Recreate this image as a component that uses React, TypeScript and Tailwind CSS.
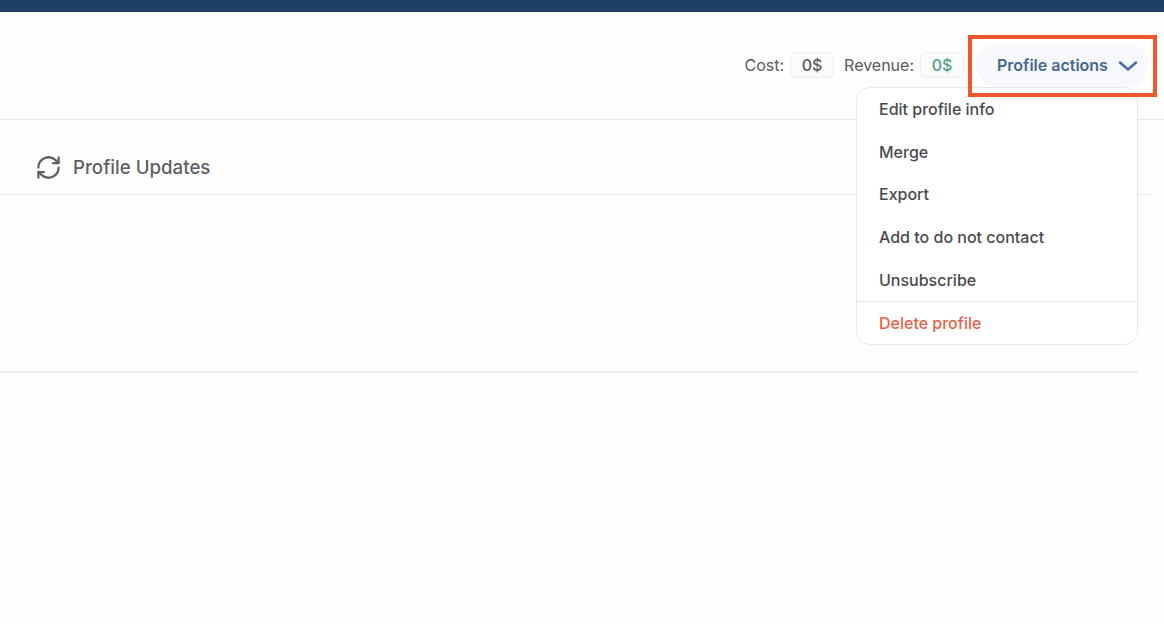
/**
 * ProfilePage — contact profile header with the actions dropdown open.
 */

const menuItems = ['Edit profile info', 'Merge', 'Export', 'Add to do not contact', 'Unsubscribe']

function RefreshIcon() {
  return (
    <svg
      viewBox="0 0 24 24"
      fill="none"
      stroke="currentColor"
      strokeWidth={2}
      strokeLinecap="round"
      strokeLinejoin="round"
      className="w-[27px] h-[27px] text-[#5f5f63]"
      aria-hidden="true"
    >
      <path d="M3 12a9 9 0 0 1 15-6.7L21 8" />
      <path d="M21 3v5h-5" />
      <path d="M21 12a9 9 0 0 1-15 6.7L3 16" />
      <path d="M3 21v-5h5" />
    </svg>
  )
}

function Amount({ label, color }: { label: string; color: string }) {
  return (
    <div className="flex items-center gap-[6px]">
      <span className="text-[16px] text-[#59595c]">{label}</span>
      <span
        className={`flex items-center justify-center w-[44px] h-[26px] rounded-[5px] border border-[#f0f0f3] bg-[#fbfbfc] text-[16px] font-medium ${color}`}
      >
        0$
      </span>
    </div>
  )
}

function ActionsMenu() {
  return (
    <div className="absolute left-[856px] top-[87px] w-[282px] h-[258px] rounded-[14px] border border-[#e8e8ec] bg-white">
      <ul className="flex flex-col">
        {menuItems.map((item) => (
          <li key={item} className="flex items-center h-[42.6px] px-[22px] text-[16px] font-medium text-[#4a4a4d]">
            {item}
          </li>
        ))}
      </ul>
      <div className="flex items-center h-[43px] px-[22px] border-t border-[#e8e8ec] text-[16px] font-medium text-[#ea5f48]">
        Delete profile
      </div>
    </div>
  )
}

export default function App() {
  return (
    <div className="relative w-[1164px] h-[624px] overflow-hidden bg-[#fefefe] font-['Inter',sans-serif]">
      <div className="h-[12px] bg-[#1f3f68]" />

      <header className="flex items-center justify-end h-[108px] pr-[15px] border-b border-[#e9e9ec]">
        <div className="flex items-center gap-[10px] mb-[2px]">
          <Amount label="Cost:" color="text-[#59595c]" />
          <Amount label="Revenue:" color="text-[#4f9f84]" />
        </div>
        <button
          type="button"
          className="flex items-center justify-between w-[173px] h-[43px] ml-[12px] pl-[21px] pr-[11px] rounded-full bg-[#f8f9fd] text-[16px] font-semibold text-[#44668f]"
        >
          <span className="mb-[2px]">Profile actions</span>
          <svg
            viewBox="0 0 20 10"
            fill="none"
            stroke="currentColor"
            strokeWidth={2.4}
            strokeLinecap="round"
            strokeLinejoin="round"
            className="w-[20px] h-[10px] text-[#4a6a92]"
            aria-hidden="true"
          >
            <path d="M2 1.5L10 8.5L18 1.5" />
          </svg>
        </button>
      </header>

      <section className="mr-[14px] h-[75px] pl-[35px] pt-[20px] border-b border-[#e9e9ec]">
        <div className="flex items-center gap-[11px] h-[54px]">
          <RefreshIcon />
          <h2 className="pt-[2px] text-[18.7px] font-medium text-[#5f5f63]">Profile Updates</h2>
        </div>
      </section>

      <div className="mr-[26px] h-[178px] border-b-2 border-[#e9e9ec]" />

      <ActionsMenu />

      {/* callout drawn over the screenshot */}
      <div className="absolute left-[968px] top-[35px] w-[189px] h-[62px] border-[4px] border-[#f0562c]" />
    </div>
  )
}
